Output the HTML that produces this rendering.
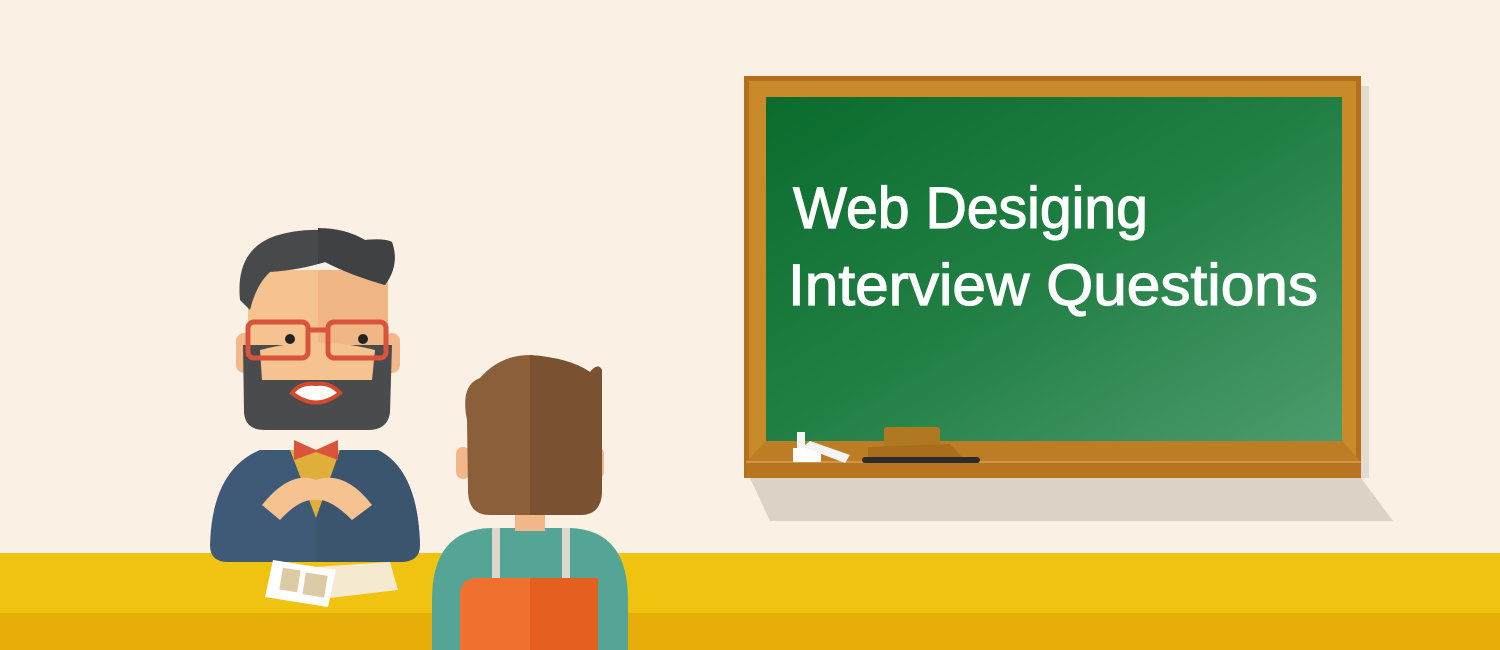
<!DOCTYPE html>
<html><head><meta charset="utf-8"><style>
html,body{margin:0;padding:0;width:1500px;height:650px;overflow:hidden;background:#faf0e4}
svg{display:block}
</style></head><body>
<svg width="1500" height="650" viewBox="0 0 1500 650" xmlns="http://www.w3.org/2000/svg">
<defs>
<linearGradient id="g" x1="0" y1="0" x2="1" y2="1">
<stop offset="0" stop-color="#0b6c2e"/><stop offset="0.5" stop-color="#217f44"/><stop offset="1" stop-color="#4c9c6d"/>
</linearGradient>
<linearGradient id="w" x1="0" y1="0" x2="0" y2="1">
<stop offset="0" stop-color="#c98d2a"/><stop offset="1" stop-color="#a8661a"/>
</linearGradient>
</defs>
<rect width="1500" height="650" fill="#faf0e4"/>
<polygon points="750,478 1361,478 1393,521 770,521" fill="#dbd3c6"/>
<rect x="1361" y="86" width="8" height="392" fill="#e3dbcf"/>
<rect x="744" y="76" width="617" height="402" fill="#b46f1c"/>
<rect x="749" y="81" width="607" height="392" fill="#c98a2a"/>
<rect x="766" y="97" width="576" height="344" fill="url(#g)"/>
<polygon points="766,441 1342,441 1361,462 746,462" fill="#bd7d25"/>
<rect x="746" y="462" width="615" height="16" fill="#b87420"/>
<line x1="746" y1="462" x2="1361" y2="462" stroke="#d8a050" stroke-width="1.5"/>
<rect x="797" y="432" width="8" height="30" fill="#f4f4f4"/>
<rect x="793" y="448" width="28" height="14" fill="#fff"/>
<polygon points="803,447 810,441 850,455 845,463" fill="#f3f3f3"/>
<rect x="884" y="427" width="56" height="20" rx="3" fill="#b07820"/>
<polygon points="868,447 950,444 962,457 868,458" fill="#a86e1c"/>
<rect x="862" y="457" width="118" height="6" rx="3" fill="#2b2b2b"/>
<g font-family="Liberation Sans, sans-serif" font-size="58" fill="#fff" stroke="#fff" stroke-width="1.2">
<text x="793" y="228" textLength="355" lengthAdjust="spacingAndGlyphs">Web Desiging</text>
<text x="788" y="305" textLength="530" lengthAdjust="spacingAndGlyphs">Interview Questions</text>
</g>
<rect x="0" y="553" width="1500" height="60" fill="#efc30f"/>
<rect x="0" y="613" width="1500" height="37" fill="#e7ae0a"/>
<!-- man body -->
<path d="M210,545 Q212,470 260,450 L378,450 Q418,470 420,545 Q420,562 400,562 L228,562 Q210,562 210,545Z" fill="#3f5a77"/>
<path d="M316,450 L378,450 Q418,470 420,545 Q420,562 400,562 L316,562Z" fill="#3b556f"/>
<polygon points="290,450 340,450 316,518" fill="#e0ae3a"/>
<path d="M262,505 Q290,470 316,480 Q345,470 372,505 L352,520 Q330,498 316,500 Q300,498 280,520Z" fill="#f5c290"/>
<polygon points="294,440 316,450 338,440 338,460 316,452 294,460" fill="#d9543a"/>
<rect x="236" y="333" width="16" height="40" rx="8" fill="#f3b88a"/>
<rect x="384" y="333" width="16" height="40" rx="8" fill="#f3b88a"/>
<rect x="248" y="270" width="140" height="130" fill="#f5c290"/>
<rect x="318" y="270" width="70" height="130" fill="#f0b686"/>
<path d="M243,345 L392,345 L390,412 Q388,430 368,430 L265,430 Q245,430 244,412Z" fill="#4a4b4d"/>
<path d="M260,350 Q316,335 375,350 L372,380 L262,380Z" fill="#f5c290"/>
<path d="M292,393 Q316,412 340,393 Q330,382 316,384 Q300,382 292,393Z" fill="#fff" stroke="#d14a2e" stroke-width="4"/>
<path d="M240,300 Q235,250 275,236 Q320,222 365,240 Q385,238 392,242 Q400,265 385,285 Q350,275 325,262 Q300,270 270,272 Q256,285 250,310Z" fill="#48494b"/>
<path d="M318,228 Q345,228 365,240 Q385,238 392,242 Q400,265 385,285 Q350,275 325,262 L318,264Z" fill="#404143"/>
<rect x="248" y="322" width="60" height="36" rx="6" fill="none" stroke="#d9543a" stroke-width="5"/>
<rect x="328" y="322" width="58" height="36" rx="6" fill="none" stroke="#d9543a" stroke-width="5"/>
<line x1="308" y1="330" x2="328" y2="330" stroke="#d9543a" stroke-width="5"/>
<circle cx="290" cy="339" r="5" fill="#222"/><circle cx="363" cy="339" r="5" fill="#222"/>
<polygon points="315,567 390,562 398,590 330,598" fill="#f5ead0"/>
<polygon points="273,560 336,570 328,607 265,597" fill="#fff"/>
<rect x="281" y="569" width="18" height="22" fill="#dccaa5" transform="rotate(9 290 580)"/>
<rect x="304" y="574" width="22" height="22" fill="#dccaa5" transform="rotate(9 315 585)"/>
<!-- boy -->
<path d="M432,650 L432,600 Q432,530 490,528 L570,528 Q628,530 628,600 L628,650Z" fill="#54a596"/>
<rect x="492" y="528" width="8" height="52" fill="#ddd6cc"/>
<rect x="562" y="528" width="8" height="52" fill="#ddd6cc"/>
<path d="M460,650 L460,595 Q460,578 478,578 L582,578 Q598,578 598,595 L598,650Z" fill="#f07030"/>
<rect x="530" y="578" width="68" height="72" fill="#e56020"/>
<rect x="515" y="505" width="30" height="26" fill="#f3b88a"/>
<rect x="456" y="447" width="14" height="32" rx="7" fill="#f3b88a"/>
<rect x="590" y="447" width="14" height="32" rx="7" fill="#f3b88a"/>
<path d="M467,420 Q460,385 480,378 Q500,355 530,355 Q570,358 590,372 Q598,362 602,370 L602,490 Q602,515 580,515 L490,515 Q468,515 468,490Z" fill="#8a5f3a"/>
<path d="M530,355 Q570,358 590,372 Q598,362 602,370 L602,490 Q602,515 580,515 L530,515Z" fill="#7a5232"/>
</svg>
</body></html>
